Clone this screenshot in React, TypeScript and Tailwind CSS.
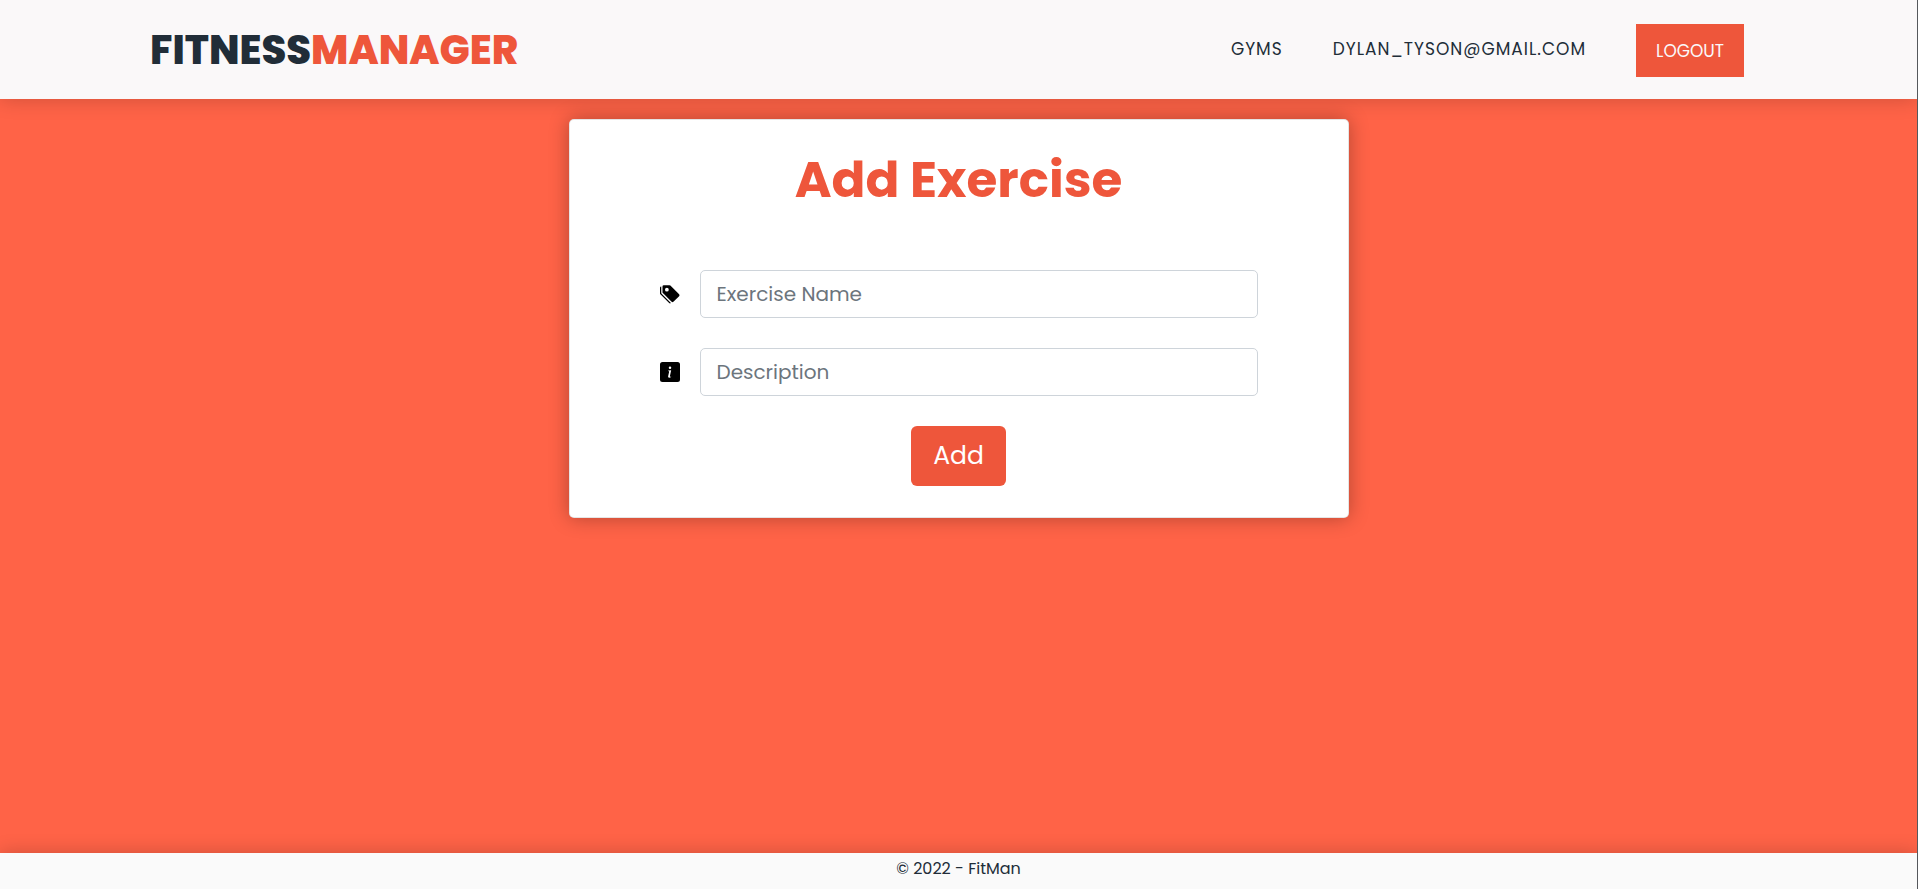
import React from "react";
import type { ReactNode } from "react";
import { BsInfoSquareFill, BsTagsFill } from "react-icons/bs";

function Header() {
  return (
    <header className="relative z-10 flex h-[99px] items-center justify-between bg-[#faf8f9] pr-[173px] pl-[150px] shadow-[0_0_20px_rgba(0,0,0,0.2)]">
      <a href="#" className="text-[40px] leading-[60px] font-extrabold text-[#212d38]">
        FITNESS<span className="text-[#ee563b]">MANAGER</span>
      </a>
      <nav className="flex items-center gap-[50px] text-[17px] text-[#212d38]">
        <a href="#" className="tracking-[1px]">
          GYMS
        </a>
        <a href="#" className="tracking-[1px]">
          DYLAN_TYSON@GMAIL.COM
        </a>
        <button type="button" className="mt-0.5 h-[53px] bg-[#ee563b] px-5 pt-0.5 text-[#faf8fa]">
          LOGOUT
        </button>
      </nav>
    </header>
  );
}

function Field({ id, label, icon }: { id: string; label: string; icon: ReactNode }) {
  return (
    <div className="flex items-center">
      <label htmlFor={id} aria-label={label} className="mr-5 text-xl text-black">
        {icon}
      </label>
      <input
        id={id}
        type="text"
        placeholder={label}
        className="h-12 min-w-0 flex-1 rounded-[5px] border border-[#ced4da] bg-white px-4 text-xl text-[#212529] placeholder:text-[#6c757d]"
      />
    </div>
  );
}

export default function App() {
  return (
    <div className="bg-white pr-0.5 pb-0.5 font-['Poppins','Inter',sans-serif]">
      <div className="flex min-h-[calc(100vh-2px)] flex-col overflow-hidden border-r border-[#55585c] bg-[#ff6347]">
        <Header />
        <main className="flex flex-1 items-start justify-center pt-5">
          <form className="flex w-full max-w-[780px] flex-col rounded-[5px] border border-black/10 bg-white px-[90px] pt-[22px] pb-[31px] shadow-[0_0_20px_rgba(0,0,0,0.3)]">
            <h1 className="mb-[52px] text-center text-[50px] leading-[76px] font-bold text-[#ee563b]">Add Exercise</h1>
            <div className="flex flex-col gap-[30px]">
              <Field id="exercise-name" label="Exercise Name" icon={<BsTagsFill />} />
              <Field id="description" label="Description" icon={<BsInfoSquareFill />} />
              <button
                type="submit"
                className="h-[60px] self-center rounded-md bg-[#ee563b] px-[22px] text-[25px] text-white"
              >
                Add
              </button>
            </div>
          </form>
        </main>
        <footer className="bg-[#fafafa] pt-1 pb-2 text-center text-base text-[#212d38] shadow-[0_0_20px_rgba(0,0,0,0.2)]">
          © 2022 - FitMan
        </footer>
      </div>
    </div>
  );
}
